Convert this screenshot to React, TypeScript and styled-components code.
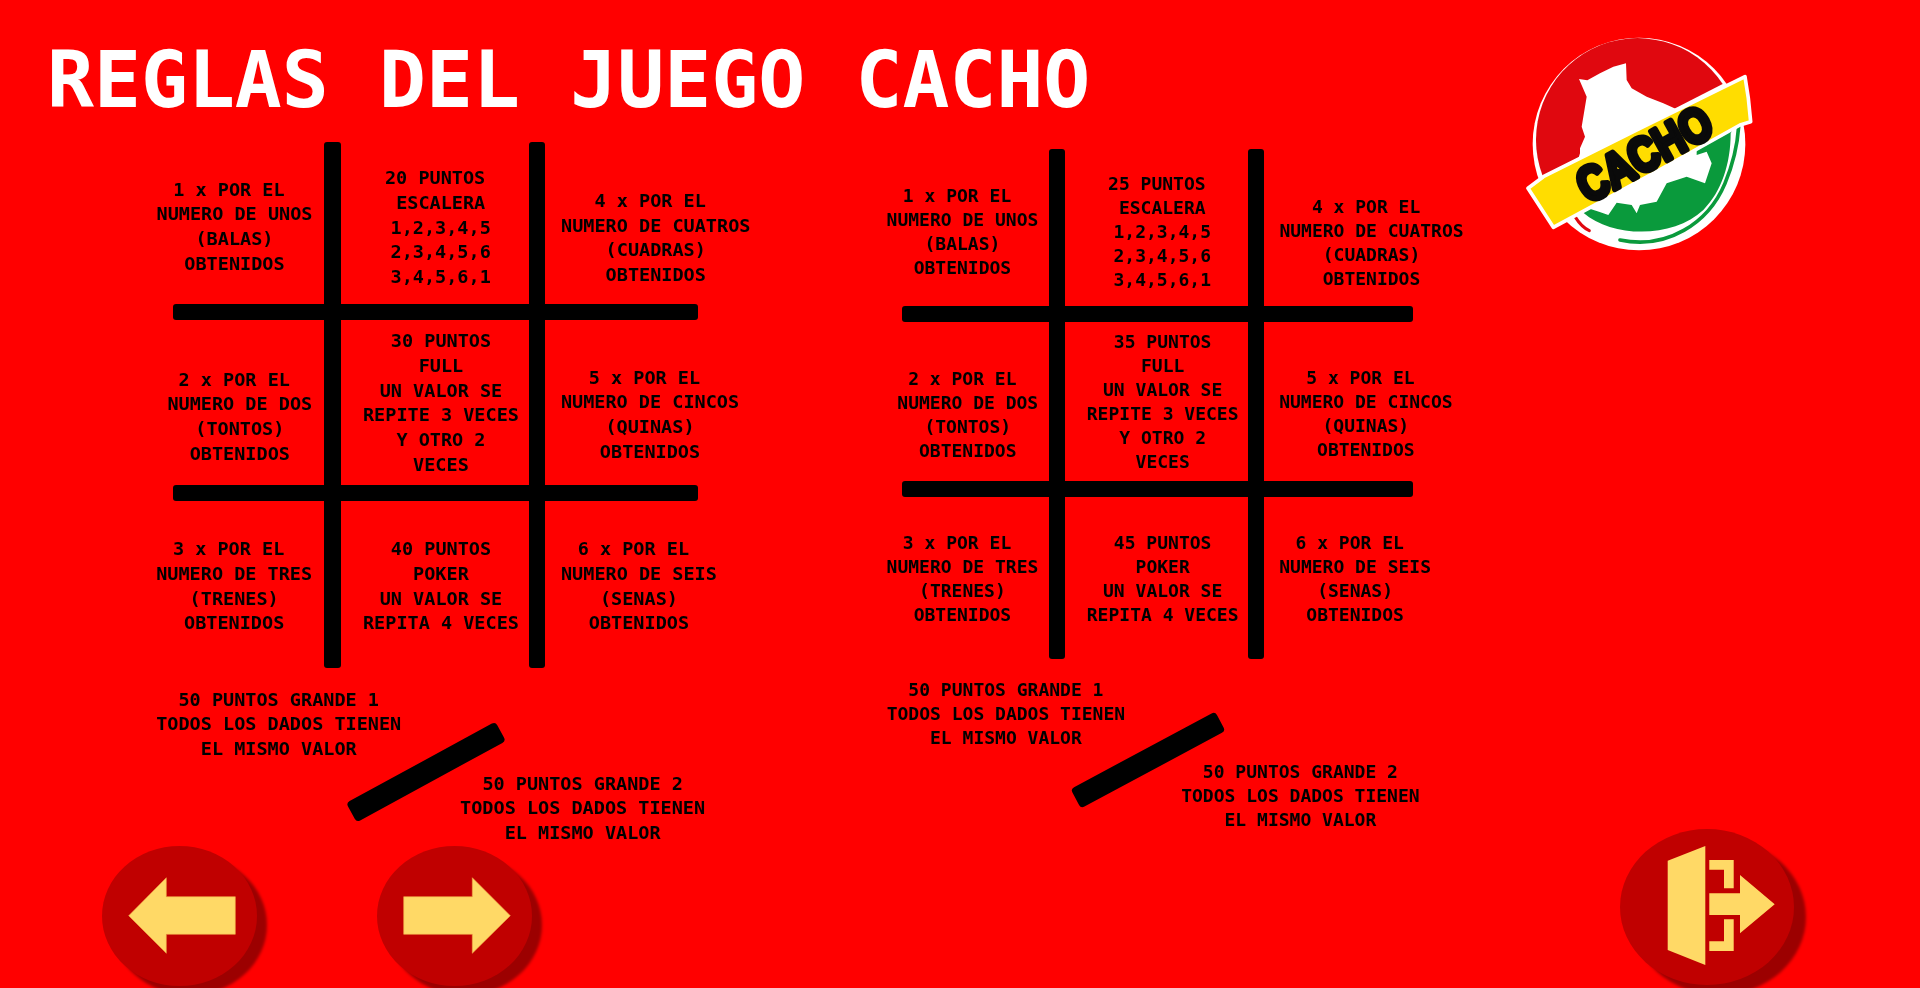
import React from "react";
import styled, { createGlobalStyle } from "styled-components";

const Global = createGlobalStyle`
  html, body { margin: 0; padding: 0; background: #ff0000; }
  body { font-family: "DejaVu Sans Mono", monospace; }
`;

const Page = styled.div`
  width: 1920px;
  height: 988px;
  background: #ff0000;
  overflow: hidden;
  display: flex;
  flex-direction: column;
`;

const Top = styled.div`
  height: 829px;
  display: flex;
  align-items: flex-start;
`;

const Main = styled.main`
  width: 1525px;
  flex: none;
`;

const Title = styled.h1`
  margin: 0;
  height: 142px;
  padding: 34px 0 0 47px;
  box-sizing: border-box;
  font: 700 78px/92px "DejaVu Sans Mono", monospace;
  color: #fff;
  white-space: pre;
  word-spacing: 3.4px;
  filter: blur(0.4px);
`;

const Boards = styled.div`
  display: flex;
  align-items: flex-start;
  padding-left: 172.5px;
  gap: 204.6px;
`;

const BoardColumn = styled.section<{ $top: number; $font: number; $line: number; $width: number }>`
  flex: none;
  width: ${(p) => p.$width}px;
  margin-top: ${(p) => p.$top}px;
  font: 700 ${(p) => p.$font}px/${(p) => p.$line}px "DejaVu Sans Mono", monospace;
  color: #000;
`;

const Grid = styled.div<{ $cols: string; $rows: string }>`
  display: grid;
  grid-template-columns: ${(p) => p.$cols};
  grid-template-rows: ${(p) => p.$rows};
`;

const VBar = styled.div<{ $col: number }>`
  grid-column: ${(p) => p.$col};
  grid-row: 1 / -1;
  background: #000;
  border-radius: 3px;
`;

const HBar = styled.div<{ $row: number }>`
  grid-row: ${(p) => p.$row};
  grid-column: 1 / -1;
  background: #000;
  border-radius: 3px;
`;

const Cell = styled.div<{ $col: number; $row: number }>`
  grid-column: ${(p) => p.$col};
  grid-row: ${(p) => p.$row};
  min-width: 0;
`;

const Lines = styled.div<{ $left: number; $top: number }>`
  width: max-content;
  margin: ${(p) => p.$top}px 0 0 ${(p) => p.$left}px;
  text-align: center;
  white-space: pre;
  filter: blur(0.45px);
`;

const Bonus = styled.div`
  display: grid;
  grid-template-columns: minmax(0, 1fr);
  justify-items: start;
  align-items: start;
`;

const BonusItem = styled(Lines)`
  grid-area: 1 / 1;
`;

const Slash = styled.div<{ $left: number; $top: number; $width: number; $angle: number }>`
  grid-area: 1 / 1;
  margin: ${(p) => p.$top}px 0 0 ${(p) => p.$left}px;
  width: ${(p) => p.$width}px;
  height: 22px;
  border-radius: 4px;
  background: #000;
  transform: rotate(${(p) => p.$angle}deg);
`;

const LogoBox = styled.div`
  margin-top: 20px;
  margin-left: -25px;
  width: 280px;
  height: 250px;
  flex: none;
  filter: blur(0.5px);
`;

const Footer = styled.footer`
  display: flex;
  align-items: flex-start;
  height: 159px;
`;

const RoundButton = styled.button<{ $w: number; $h: number; $left: number; $top: number; $dx: number; $dy: number }>`
  flex: none;
  width: ${(p) => p.$w}px;
  height: ${(p) => p.$h}px;
  margin: ${(p) => p.$top}px 0 0 ${(p) => p.$left}px;
  padding: 0;
  border: 0;
  border-radius: 50%;
  background: #c00000;
  box-shadow: ${(p) => p.$dx}px ${(p) => p.$dy}px 3px #9c0000;
  display: block;
  svg { display: block; width: 100%; height: 100%; filter: blur(0.3px); }
`;

const ICON = "#ffd966";
const ICON_EDGE = "#f0a848";

type CellData = { col: number; row: number; left: number; top: number; lines: string[] };
type BoardData = {
  top: number;
  width: number;
  font: number;
  line: number;
  cols: string;
  rows: string;
  cells: CellData[];
  slash: { left: number; top: number; width: number; angle: number };
  bonus1: { left: number; top: number };
  bonus2: { left: number; top: number };
};

const obt = "OBTENIDOS";
const makeCells = (
  center: [string, string, string],
  pos: [number, number][]
): CellData[] => {
  const slots: [number, number, string[]][] = [
    [1, 1, ["1 x POR EL ", "NUMERO DE UNOS", "(BALAS)", obt]],
    [3, 1, [`${center[0]} PUNTOS `, "ESCALERA", "1,2,3,4,5", "2,3,4,5,6", "3,4,5,6,1"]],
    [5, 1, ["4 x POR EL ", "NUMERO DE CUATROS", "(CUADRAS)", obt]],
    [1, 3, ["2 x POR EL ", "NUMERO DE DOS", "(TONTOS)", obt]],
    [3, 3, [`${center[1]} PUNTOS`, "FULL", "UN VALOR SE", "REPITE 3 VECES", "Y OTRO 2", "VECES"]],
    [5, 3, ["5 x POR EL ", "NUMERO DE CINCOS", "(QUINAS)", obt]],
    [1, 5, ["3 x POR EL ", "NUMERO DE TRES", "(TRENES)", obt]],
    [3, 5, [`${center[2]} PUNTOS`, "POKER", "UN VALOR SE", "REPITA 4 VECES"]],
    [5, 5, ["6 x POR EL ", "NUMERO DE SEIS", "(SENAS)", obt]],
  ];
  return slots.map(([col, row, lines], i) => ({ col, row, lines, left: pos[i][0], top: pos[i][1] }));
};

const boards: BoardData[] = [
  {
    top: 0,
    width: 525.1,
    font: 18.5,
    line: 24.67,
    cols: "151.5px 16.6px 188.2px 16.6px 152.2px",
    rows: "162px 16px 165px 16px 167px",
    cells: makeCells(["20", "30", "40"], [
      [-16, 35.7], [44.4, 24.4], [15.7, 47],
      [-5.1, 47.5], [22.4, 9.4], [15.5, 45.7],
      [-16.3, 36.4], [22.4, 36.4], [15.6, 36.4],
    ]),
    slash: { left: 168.5, top: 93, width: 170, angle: -28.6 },
    bonus1: { left: -16.3, top: 19.7 },
    bonus2: { left: 287.6, top: 103.7 },
  },
  {
    top: 7,
    width: 510.5,
    font: 18,
    line: 24,
    cols: "147.3px 16px 182.6px 16px 148.6px",
    rows: "156.7px 16.4px 159.4px 16px 161.5px",
    cells: makeCells(["25", "35", "45"], [
      [-15.6, 34.7], [42.6, 22.7], [15.3, 45.7],
      [-4.9, 45], [21.3, 7.7], [15.1, 43.7],
      [-15.6, 33.6], [21.3, 33.6], [15.2, 33.6],
    ]),
    slash: { left: 164.3, top: 90, width: 164, angle: -28.2 },
    bonus1: { left: -15.5, top: 18.7 },
    bonus2: { left: 279, top: 100.7 },
  },
];

const bonusLines = (n: number) => [`50 PUNTOS GRANDE ${n}`, "TODOS LOS DADOS TIENEN", "EL MISMO VALOR"];

const Block = ({ lines, left, top }: { lines: string[]; left: number; top: number }) => (
  <Lines $left={left} $top={top}>
    {lines.join("\n")}
  </Lines>
);

const Board = ({ data }: { data: BoardData }) => (
  <BoardColumn $top={data.top} $font={data.font} $line={data.line} $width={data.width}>
    <Grid $cols={data.cols} $rows={data.rows}>
      <VBar $col={2} />
      <VBar $col={4} />
      <HBar $row={2} />
      <HBar $row={4} />
      {data.cells.map((c) => (
        <Cell key={`${c.col}-${c.row}`} $col={c.col} $row={c.row}>
          <Block lines={c.lines} left={c.left} top={c.top} />
        </Cell>
      ))}
    </Grid>
    <Bonus>
      <BonusItem $left={data.bonus1.left} $top={data.bonus1.top}>
        {bonusLines(1).join("\n")}
      </BonusItem>
      <Slash $left={data.slash.left} $top={data.slash.top} $width={data.slash.width} $angle={data.slash.angle} />
      <BonusItem $left={data.bonus2.left} $top={data.bonus2.top}>
        {bonusLines(2).join("\n")}
      </BonusItem>
    </Bonus>
  </BoardColumn>
);

const Logo = () => (
  <svg viewBox="0 0 840 750" width="280" height="250" aria-label="Cacho logo">
    <circle cx="417" cy="372" r="319" fill="#fff" />
    <path d="M128 468 A305 305 0 0 1 668 192 Z" fill="#e0080f" />
    <path d="M225 590 Q245 622 268 632" stroke="#e0080f" strokeWidth="9" fill="none" strokeLinecap="round" />
    <path d="M250 578 C340 655 520 655 610 570 C665 515 692 430 692 340 L715 300 Z" fill="#0a9a3c" />
    <path d="M360 660 C500 690 625 610 675 490 C700 430 712 380 716 320" stroke="#0a9a3c" strokeWidth="11" fill="none" strokeLinecap="round" />
    <path
      d="M237 177 L262 181 L300 160 L340 140 L378 130 L380 180 L395 205 L440 230 L490 250 L530 268 L590 330 L590 405 L620 395 L635 430 L615 490 L560 470 L500 490 L470 545 L420 555 L410 580 L395 555 L350 548 L325 585 L297 575 L250 560 L215 480 L240 400 L240 385 L255 350 L245 320 L260 230 Z"
      fill="#fff"
    />
    <path
      d="M84 505 L130 470 L420 325 L735 170 L745 235 L752 305 L720 315 L460 460 L160 622 Z"
      fill="#ffdd00"
      stroke="#fff"
      strokeWidth="11"
      strokeLinejoin="round"
    />
    <text
      x="0"
      y="0"
      transform="translate(265 552) rotate(-29)"
      fontFamily="'Liberation Sans', sans-serif"
      fontWeight="700"
      fontSize="145"
      textLength="440"
      lengthAdjust="spacingAndGlyphs"
      fill="#0a0a0a"
      stroke="#0a0a0a"
      strokeWidth="17"
      strokeLinejoin="round"
    >
      CACHO
    </text>
  </svg>
);

const ArrowLeft = () => (
  <svg viewBox="0 0 155 140">
    <path d="M26.7 69.7 L64.3 31.7 V50.7 H133.3 V88.3 H64.3 V107.3 Z" fill={ICON} stroke={ICON_EDGE} strokeWidth="0.6" />
  </svg>
);

const ArrowRight = () => (
  <svg viewBox="0 0 155 140">
    <path d="M133.3 69.7 L95.3 31.7 V50.7 H26.7 V88.3 H95.3 V107.3 Z" fill={ICON} stroke={ICON_EDGE} strokeWidth="0.6" />
  </svg>
);

const ExitIcon = () => (
  <svg viewBox="0 0 174 156">
    <g fill={ICON}>
      <path d="M47.7 31.7 L85.3 17 V136 L47.7 121 Z" />
      <path d="M89.3 31 H113.7 V59.3 H104 V40.7 H89.3 Z" />
      <path d="M89.3 122 H113.7 V90.3 H104 V112.3 H89.3 Z" />
      <path d="M89.3 64.3 H120 V46 L154.7 75.3 L120 104.3 V86 H89.3 Z" />
    </g>
  </svg>
);

export default function App() {
  return (
    <Page>
      <Global />
      <Top>
        <Main>
          <Title>REGLAS DEL JUEGO CACHO</Title>
          <Boards>
            {boards.map((b) => (
              <Board key={b.cells[1].lines[0]} data={b} />
            ))}
          </Boards>
        </Main>
        <LogoBox>
          <Logo />
        </LogoBox>
      </Top>
      <Footer>
        <RoundButton $w={155} $h={140} $left={101.7} $top={17} $dx={10} $dy={9} aria-label="Anterior">
          <ArrowLeft />
        </RoundButton>
        <RoundButton $w={155} $h={140} $left={120} $top={17} $dx={10} $dy={9} aria-label="Siguiente">
          <ArrowRight />
        </RoundButton>
        <RoundButton $w={174} $h={156} $left={1088.3} $top={0} $dx={12} $dy={10} aria-label="Salir">
          <ExitIcon />
        </RoundButton>
      </Footer>
    </Page>
  );
}
